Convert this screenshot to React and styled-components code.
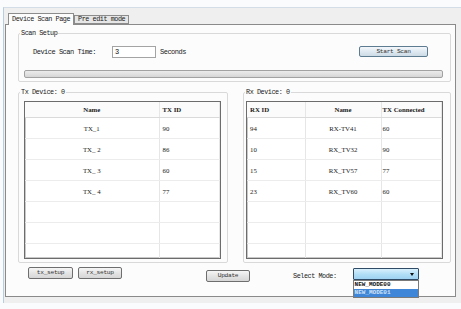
import React from 'react';
import styled, { createGlobalStyle } from 'styled-components';

const GlobalStyle = createGlobalStyle`
  html, body {
    margin: 0;
    padding: 0;
    background: #fafbfc;
  }
  body {
    font-family: "Liberation Mono", "DejaVu Sans Mono", monospace;
    color: #1a1a1a;
  }
`;

const txDevices = [
  ['TX_1', '90'],
  ['TX_ 2', '86'],
  ['TX_ 3', '60'],
  ['TX_ 4', '77'],
];

const rxDevices = [
  ['94', 'RX-TV41', '60'],
  ['10', 'RX_TV32', '90'],
  ['15', 'RX_TV57', '77'],
  ['23', 'RX_TV60', '60'],
];

const ROW_COUNT = 7;

export default function App() {
  const txRows = Array.from({ length: ROW_COUNT }, (_, i) => txDevices[i] || ['', '']);
  const rxRows = Array.from({ length: ROW_COUNT }, (_, i) => rxDevices[i] || ['', '', '']);

  return (
    <Screen>
      <GlobalStyle />
      <Window>
        <TabsRow>
          <Tab $active>Device Scan Page</Tab>
          <Tab>Pre edit mode</Tab>
        </TabsRow>
        <Panel>
          <GroupBox>
            <Legend>Scan Setup</Legend>
            <ScanRow>
              <Label>Device Scan Time:</Label>
              <TextInput defaultValue="3" />
              <Label $plain>Seconds</Label>
              <StartButton>Start Scan</StartButton>
            </ScanRow>
            <Progress />
          </GroupBox>

          <DevicesRow>
            <GroupBox $width={210} $height={174}>
              <Legend>Tx Device: 0</Legend>
              <TableFrame $ml={5} $mr={6}>
                <Table>
                  <colgroup>
                    <col style={{ width: 134 }} />
                    <col />
                  </colgroup>
                  <thead>
                    <tr>
                      <Th $align="center">Name</Th>
                      <Th>TX ID</Th>
                    </tr>
                  </thead>
                  <tbody>
                    {txRows.map((r, i) => (
                      <tr key={i}>
                        <Td $align="center">{r[0]}</Td>
                        <Td>{r[1]}</Td>
                      </tr>
                    ))}
                  </tbody>
                </Table>
              </TableFrame>
            </GroupBox>

            <GroupBox $grow $height={174}>
              <Legend>Rx Device: 0</Legend>
              <TableFrame $ml={2} $mr={7}>
                <Table>
                  <colgroup>
                    <col style={{ width: 58 }} />
                    <col style={{ width: 76 }} />
                    <col />
                  </colgroup>
                  <thead>
                    <tr>
                      <Th>RX ID</Th>
                      <Th $align="center">Name</Th>
                      <Th $tight>TX Connected</Th>
                    </tr>
                  </thead>
                  <tbody>
                    {rxRows.map((r, i) => (
                      <tr key={i}>
                        <Td>{r[0]}</Td>
                        <Td $align="center">{r[1]}</Td>
                        <Td $tight>{r[2]}</Td>
                      </tr>
                    ))}
                  </tbody>
                </Table>
              </TableFrame>
            </GroupBox>
          </DevicesRow>

          <BottomRow>
            <Button $w={45} $mt={4}>tx_setup</Button>
            <Button $w={44} $mt={4} $ml={5}>rx_setup</Button>
            <Button $w={44} $mt={7} $ml={84}>Update</Button>
            <ModeLabel>Select Mode:</ModeLabel>
            <Dropdown>
              <Arrow />
              <DropList>
                <DropItem>NEW_MODE00</DropItem>
                <DropItem $selected>NEW_MODE01</DropItem>
              </DropList>
            </Dropdown>
          </BottomRow>
        </Panel>
      </Window>
    </Screen>
  );
}

const Screen = styled.div`
  width: 461px;
  height: 309px;
  padding-top: 7px;
  box-sizing: border-box;
  overflow: hidden;
`;

const Window = styled.div`
  margin-left: 3px;
  height: 296px;
  box-sizing: border-box;
  border-left: 1px solid #b6cde3;
  border-top: 1px solid #d2dde8;
  background: #efefef;
  padding: 5px 0 0 1px;
`;

const TabsRow = styled.div`
  display: flex;
  align-items: flex-end;
  height: 11px;
  margin-left: 3px;
`;

const Tab = styled.div`
  position: relative;
  z-index: ${p => (p.$active ? 2 : 1)};
  box-sizing: border-box;
  height: ${p => (p.$active ? 12 : 9)}px;
  margin-bottom: ${p => (p.$active ? -1 : 0)}px;
  padding: 0 3px;
  border: 1px solid #8c8c8c;
  border-bottom: ${p => (p.$active ? 'none' : '1px solid #8c8c8c')};
  background: ${p => (p.$active ? '#fcfcfc' : '#e6e6e6')};
  font-size: 6.8px;
  letter-spacing: -0.45px;
  line-height: ${p => (p.$active ? 10 : 7)}px;
  color: #1a1a1a;
  white-space: nowrap;
`;

const Panel = styled.div`
  position: relative;
  width: 451px;
  height: 273px;
  box-sizing: border-box;
  border: 1px solid #8a8a8a;
  background: #fcfcfc;
  padding: 5px 4px 0 12px;
`;

const GroupBox = styled.fieldset`
  margin: 0;
  padding: 0;
  min-width: 0;
  border: 1px solid #d9d9d9;
  border-radius: 2px;
  ${p => (p.$width ? `width: ${p.$width}px;` : '')}
  ${p => (p.$grow ? 'flex: 1;' : '')}
  ${p => (p.$height ? `height: ${p.$height}px;` : '')}
  box-sizing: border-box;
`;

const Legend = styled.legend`
  margin-left: 1px;
  padding: 0 1px;
  font-size: 6.8px;
  letter-spacing: -0.45px;
  line-height: 7px;
  color: #1a1a1a;
`;

const ScanRow = styled.div`
  display: flex;
  align-items: center;
  height: 12px;
  margin-top: 9px;
  padding: 0 22px 0 14px;
`;

const Label = styled.span`
  width: ${p => (p.$plain ? 'auto' : '79px')};
  margin-left: ${p => (p.$plain ? 4 : 0)}px;
  font-size: 7px;
  letter-spacing: -0.5px;
  white-space: nowrap;
`;

const TextInput = styled.input`
  width: 44px;
  height: 12px;
  box-sizing: border-box;
  border: 1px solid #a4a4a4;
  padding: 0 2px;
  font-family: "Liberation Mono", monospace;
  font-size: 7px;
  color: #111;
  background: #fff;
  outline: none;
`;

const Button = styled.button`
  width: ${p => p.$w}px;
  height: 12px;
  margin-top: ${p => p.$mt || 0}px;
  margin-left: ${p => p.$ml || 0}px;
  padding: 0;
  box-sizing: border-box;
  border: 1px solid #6e6e6e;
  border-radius: 2px;
  background: linear-gradient(#f6f6f6, #e4e4e4 50%, #d6d6d6);
  font-family: "Liberation Mono", monospace;
  font-size: 6.2px;
  letter-spacing: -0.3px;
  line-height: 10px;
  color: #333;
`;

const StartButton = styled(Button)`
  width: 69px;
  height: 11px;
  margin-left: auto;
  margin-top: -1px;
  border-color: #5d7c92;
  background: linear-gradient(#f4f8fb, #dfe9f1 50%, #cddbe6);
`;

const Progress = styled.div`
  height: 8px;
  margin: 12px 7px 3px 5px;
  box-sizing: border-box;
  border: 1px solid #a2a2a2;
  border-radius: 2px;
  background: linear-gradient(#ececec, #d6d6d6);
`;

const DevicesRow = styled.div`
  display: flex;
  gap: 15px;
  margin-top: 7px;
`;

const TableFrame = styled.div`
  height: 158px;
  margin: 5px ${p => p.$mr}px 0 ${p => p.$ml}px;
  box-sizing: border-box;
  border: 1px solid #6c6c6c;
  box-shadow: inset 0 0 0 1px #c8c8c8;
  background: #fff;
  overflow: hidden;
`;

const Table = styled.table`
  width: 100%;
  border-collapse: collapse;
  table-layout: fixed;
  font-family: "Liberation Serif", "DejaVu Serif", serif;
  font-size: 6.8px;
  color: #1a1a1a;
`;

const Th = styled.th`
  height: 15px;
  padding: 0 ${p => (p.$tight ? 1 : 3)}px;
  text-align: ${p => p.$align || 'left'};
  font-weight: bold;
  white-space: nowrap;
  border-bottom: 1px solid #dadada;
  border-right: 1px solid #e6e6e6;
  background: #fbfbfb;
`;

const Td = styled.td`
  height: 20px;
  padding: 0 ${p => (p.$tight ? 1 : 3)}px;
  text-align: ${p => p.$align || 'left'};
  white-space: nowrap;
  border-bottom: 1px solid #ececec;
  border-right: 1px solid #e6e6e6;
`;

const BottomRow = styled.div`
  display: flex;
  align-items: flex-start;
  padding-left: 10px;
`;

const ModeLabel = styled.span`
  margin: 9px 0 0 43px;
  font-size: 6.8px;
  letter-spacing: -0.45px;
  white-space: nowrap;
`;

const Dropdown = styled.div`
  position: relative;
  width: 66px;
  height: 12px;
  margin: 5px 0 0 16px;
  box-sizing: border-box;
  border: 1px solid #2f4b66;
  border-radius: 1px;
  background: linear-gradient(#d8f0fd, #b3dff7 50%, #9dd2f1);
`;

const Arrow = styled.span`
  position: absolute;
  right: 4px;
  top: 4px;
  width: 0;
  height: 0;
  border-left: 2px solid transparent;
  border-right: 2px solid transparent;
  border-top: 3px solid #111;
`;

const DropList = styled.div`
  position: absolute;
  left: -1px;
  top: 11px;
  width: 66px;
  box-sizing: border-box;
  border: 1px solid #7a7a7a;
  background: #fff;
`;

const DropItem = styled.div`
  height: 8px;
  padding-left: 1px;
  font-size: 6px;
  line-height: 8px;
  font-weight: bold;
  color: ${p => (p.$selected ? '#cfe3f7' : '#111')};
  background: ${p => (p.$selected ? '#3f86d8' : '#fff')};
  white-space: nowrap;
`;
